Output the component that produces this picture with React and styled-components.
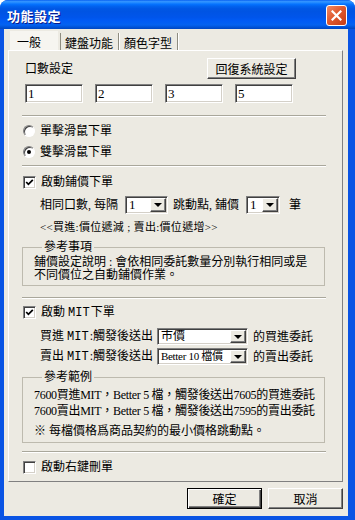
import styled, { createGlobalStyle } from "styled-components";

const GlobalStyle = createGlobalStyle`
  html, body {
    margin: 0;
    padding: 0;
    background: #fff;
  }
  body {
    font-family: "Liberation Serif", "Noto Sans CJK TC", serif;
    font-size: 12px;
    color: #000;
  }
  * {
    box-sizing: border-box;
  }
`;

const FACE = "#ECEAE2";
const FRAME = "#0a54e4";

const Frame = styled.div`
  width: 355px;
  height: 520px;
  display: flex;
  flex-direction: column;
  background: ${FRAME};
  border-radius: 8px 8px 0 0;
  overflow: hidden;
`;

const TitleBar = styled.div`
  flex: none;
  height: 29px;
  display: flex;
  align-items: center;
  justify-content: space-between;
  padding: 1px 8px 0 7px;
  background: linear-gradient(
    to bottom,
    #0058ee 0%,
    #3593ff 4%,
    #288eff 8%,
    #127dff 12%,
    #036ffc 16%,
    #0262ee 22%,
    #0057e5 30%,
    #0054e3 40%,
    #0055eb 60%,
    #005bf5 72%,
    #0462f0 86%,
    #0052d6 94%,
    #0046c0 100%
  );
`;

const Title = styled.span`
  color: #fff;
  font-family: "Noto Sans CJK TC", sans-serif;
  font-weight: bold;
  font-size: 13px;
  letter-spacing: 0.5px;
  text-shadow: 1px 1px 0 #0a1a8a;
`;

const CloseButton = styled.div`
  width: 21px;
  height: 21px;
  border: 1px solid #fff;
  border-radius: 3px;
  background: linear-gradient(135deg, #f08a64 0%, #e05a30 45%, #c63c14 100%);
  display: flex;
  align-items: center;
  justify-content: center;
`;

const Client = styled.div`
  flex: 1;
  display: flex;
  flex-direction: column;
  background: ${FACE};
  border-style: solid;
  border-color: ${FRAME};
  border-width: 0 7px 4px 4px;
`;

const TabStrip = styled.div`
  height: 21px;
  display: flex;
  align-items: flex-end;
  padding-left: 6px;
`;

const Tab = styled.div`
  font-family: "Noto Sans CJK TC", sans-serif;
  font-size: 12px;
  line-height: 14px;
  height: ${({ $active }) => ($active ? 19 : 17)}px;
  padding: ${({ $active }) => ($active ? "4px 17px 0 7px" : "3px 5px 0 4px")};
  background: ${({ $active }) => ($active ? "#f6f5f0" : "transparent")};
  border-right: ${({ $active }) => ($active ? "none" : "1px solid #8e8c80")};
  box-shadow: ${({ $active }) => ($active ? "none" : "1px 0 0 #fff")};
  margin-right: ${({ $active }) => ($active ? 2 : 1)}px;
  border-left: ${({ $first }) => ($first ? "1px solid #8e8c80" : "none")};
`;

const Panel = styled.div`
  margin: 0 5px 0 4px;
  border: 1px solid;
  border-color: #fff #808080 #808080 #fff;
  padding: 0 16px 6px 13px;
  font-family: "Liberation Serif", "Noto Sans CJK TC", serif;
`;

const TopBlock = styled.div`
  margin-left: 3px;
  width: 271px;
`;

const TopRow = styled.div`
  margin-top: 7px;
  height: 21px;
  display: flex;
  align-items: center;
  justify-content: space-between;
`;

const Label = styled.span`
  font-size: 12px;
  line-height: 16px;
  white-space: nowrap;
`;

const PushButton = styled.div`
  width: ${({ $w }) => $w}px;
  height: 21px;
  display: flex;
  align-items: center;
  justify-content: center;
  font-size: 12px;
  background: ${FACE};
  border: 1px solid;
  border-color: ${({ $default }) =>
    $default ? "#000" : "#fff #404040 #404040 #fff"};
  box-shadow: ${({ $default }) =>
    $default
      ? "inset 1px 1px 0 #fff, inset -1px -1px 0 #404040, inset -2px -2px 0 #808080"
      : "inset -1px -1px 0 #808080"};
`;

const InputRow = styled.div`
  margin-top: 5px;
  display: flex;
  gap: 12px;
`;

const TextBox = styled.input`
  width: 58px;
  height: 19px;
  margin: 0;
  padding: 0 2px;
  font-family: "Liberation Serif", serif;
  font-size: 13px;
  background: #fff;
  border: 1px solid;
  border-color: #808080 #fff #fff #808080;
  box-shadow: inset 1px 1px 0 #404040, inset -1px -1px 0 #d4d0c8;
  outline: none;
`;

const Separator = styled.div`
  margin-top: ${({ $mt }) => $mt}px;
  height: 2px;
  border-top: 1px solid #a9a79b;
  border-bottom: 1px solid #fff;
`;

const OptionRow = styled.div`
  margin-top: ${({ $mt }) => $mt}px;
  height: 16px;
  display: flex;
  align-items: center;
  padding-left: 1px;
  gap: ${({ $gap }) => $gap}px;
`;

const RadioCircle = styled.span`
  width: 12px;
  height: 12px;
  border-radius: 50%;
  border: 1px solid;
  border-color: #808080 #fff #fff #808080;
  box-shadow: inset 1px 1px 0 #404040;
  background: #fff;
  display: flex;
  align-items: center;
  justify-content: center;
`;

const RadioDot = styled.span`
  width: 4px;
  height: 4px;
  border-radius: 50%;
  background: #000;
`;

const CheckBox = styled.span`
  width: 13px;
  height: 13px;
  background: #fff;
  border: 1px solid;
  border-color: #808080 #fff #fff #808080;
  box-shadow: inset 1px 1px 0 #404040, inset -1px -1px 0 #d4d0c8;
  display: flex;
  align-items: center;
  justify-content: center;
`;

const FieldRow = styled.div`
  margin-top: ${({ $mt }) => $mt}px;
  height: ${({ $h }) => $h}px;
  display: flex;
  align-items: center;
  padding-left: 18px;
  white-space: nowrap;
`;

const Mono = styled.span`
  font-family: "Liberation Mono", monospace;
  font-size: 12px;
  margin: 0 1px 0 3px;
`;

const ComboBox = styled.div`
  width: ${({ $w }) => $w}px;
  height: ${({ $h }) => $h}px;
  margin: 0 ${({ $mr }) => $mr}px 0 ${({ $ml }) => $ml}px;
  display: flex;
  padding: 1px;
  background: #fff;
  border: 1px solid;
  border-color: #808080 #fff #fff #808080;
  box-shadow: inset 1px 1px 0 #404040, inset -1px -1px 0 #d4d0c8;
`;

const ComboText = styled.span`
  flex: 1;
  min-width: 0;
  padding-left: 2px;
  font-size: ${({ $fs }) => $fs}px;
  letter-spacing: ${({ $ls }) => $ls}px;
  line-height: ${({ $h }) => $h - 4}px;
  white-space: nowrap;
  overflow: hidden;
`;

const ComboButton = styled.span`
  flex: none;
  width: 16px;
  background: ${FACE};
  border: 1px solid;
  border-color: #fff #404040 #404040 #fff;
  box-shadow: inset -1px -1px 0 #808080;
  display: flex;
  align-items: center;
  justify-content: center;
`;

const Arrow = styled.span`
  width: 0;
  height: 0;
  border-left: 4px solid transparent;
  border-right: 4px solid transparent;
  border-top: 4px solid #000;
`;

const Note = styled.div`
  margin-top: 6px;
  height: 14px;
  line-height: 14px;
  padding-left: 18px;
  font-size: 11px;
  letter-spacing: 0.3px;
  white-space: nowrap;
`;

const Group = styled.fieldset`
  margin: ${({ $mt }) => $mt}px 1px 0 0;
  padding: ${({ $pt }) => $pt}px 4px 3px 11px;
  border: 1px solid #bdbaae;
  min-width: 0;
`;

const Legend = styled.legend`
  margin-left: 8px;
  padding: 0 2px;
  height: 14px;
  line-height: 14px;
  font-size: 12px;
`;

const GroupLine = styled.div`
  margin-top: ${({ $mt }) => $mt || 0}px;
  line-height: ${({ $lh }) => $lh}px;
  font-size: 12px;
  letter-spacing: ${({ $ls }) => $ls || 0}px;
  white-space: nowrap;
`;

const Footer = styled.div`
  margin-top: 6px;
  display: flex;
  justify-content: flex-end;
  gap: 6px;
  padding-right: 5px;
`;

const Radio = ({ checked, children, mt }) => (
  <OptionRow $mt={mt} $gap={5}>
    <RadioCircle>{checked && <RadioDot />}</RadioCircle>
    <Label>{children}</Label>
  </OptionRow>
);

const Check = ({ checked, children, mt }) => (
  <OptionRow $mt={mt} $gap={5}>
    <CheckBox>
      {checked && (
        <svg width="9" height="9" viewBox="0 0 9 9">
          <polyline
            points="1.2,4 3.4,6.3 7.8,1.8"
            fill="none"
            stroke="#000"
            strokeWidth="1.8"
          />
        </svg>
      )}
    </CheckBox>
    <Label>{children}</Label>
  </OptionRow>
);

const Combo = ({ value, w, h, ml, mr, fs = 12, ls = 0 }) => (
  <ComboBox $w={w} $h={h} $ml={ml} $mr={mr}>
    <ComboText $fs={fs} $ls={ls} $h={h}>
      {value}
    </ComboText>
    <ComboButton>
      <Arrow />
    </ComboButton>
  </ComboBox>
);

export default function App() {
  return (
    <>
      <GlobalStyle />
      <Frame>
        <TitleBar>
          <Title>功能設定</Title>
          <CloseButton>
            <svg width="11" height="11" viewBox="0 0 11 11">
              <path
                d="M1.5 1.5 L9.5 9.5 M9.5 1.5 L1.5 9.5"
                stroke="#fff"
                strokeWidth="2.2"
                strokeLinecap="square"
              />
            </svg>
          </CloseButton>
        </TitleBar>
        <Client>
          <TabStrip>
            <Tab $active>一般</Tab>
            <Tab $first>鍵盤功能</Tab>
            <Tab>顏色字型</Tab>
          </TabStrip>
          <Panel>
            <TopBlock>
              <TopRow>
                <Label>口數設定</Label>
                <PushButton $w={89}>回復系統設定</PushButton>
              </TopRow>
              <InputRow>
                <TextBox defaultValue="1" readOnly />
                <TextBox defaultValue="2" readOnly />
                <TextBox defaultValue="3" readOnly />
                <TextBox defaultValue="5" readOnly />
              </InputRow>
            </TopBlock>

            <Separator $mt={12} />
            <Radio mt={6}>單擊滑鼠下單</Radio>
            <Radio mt={5} checked>
              雙擊滑鼠下單
            </Radio>
            <Separator $mt={5} />

            <Check mt={7} checked>
              啟動鋪價下單
            </Check>
            <FieldRow $mt={6} $h={18}>
              <Label>相同口數, 每隔</Label>
              <Combo value="1" w={43} h={18} ml={7} mr={5} fs={13} />
              <Label>跳動點, 鋪價</Label>
              <Combo value="1" w={34} h={18} ml={7} mr={9} fs={13} />
              <Label>筆</Label>
            </FieldRow>
            <Note>&lt;&lt;買進:價位遞減 ; 賣出:價位遞增&gt;&gt;</Note>

            <Group $mt={6} $pt={2}>
              <Legend>參考事項</Legend>
              <GroupLine $lh={13}>鋪價設定說明 : 會依相同委託數量分別執行相同或是</GroupLine>
              <GroupLine $lh={13}>不同價位之自動鋪價作業。</GroupLine>
            </Group>

            <Separator $mt={11} />
            <Check mt={5} checked>
              啟動<Mono>MIT</Mono>下單
            </Check>
            <FieldRow $mt={8} $h={17}>
              <Label>
                買進<Mono>MIT</Mono>:觸發後送出
              </Label>
              <Combo value="市價" w={91} h={17} ml={4} mr={5} />
              <Label>的買進委託</Label>
            </FieldRow>
            <FieldRow $mt={3} $h={17}>
              <Label>
                賣出<Mono>MIT</Mono>:觸發後送出
              </Label>
              <Combo value="Better 10 檔價" w={91} h={17} ml={4} mr={5} fs={11} ls={-0.3} />
              <Label>的賣出委託</Label>
            </FieldRow>

            <Group $mt={5} $pt={3}>
              <Legend>參考範例</Legend>
              <GroupLine $lh={16} $ls={-0.3}>
                7600買進MIT，Better 5 檔，觸發後送出7605的買進委託
              </GroupLine>
              <GroupLine $lh={16} $ls={-0.3}>
                7600賣出MIT，Better 5 檔，觸發後送出7595的賣出委託
              </GroupLine>
              <GroupLine $lh={16} $mt={4}>
                ※ 每檔價格爲商品契約的最小價格跳動點。
              </GroupLine>
            </Group>

            <Separator $mt={8} />
            <Check mt={6}>啟動右鍵刪單</Check>
          </Panel>
          <Footer>
            <PushButton $w={75} $default>
              確定
            </PushButton>
            <PushButton $w={75}>取消</PushButton>
          </Footer>
        </Client>
      </Frame>
    </>
  );
}
